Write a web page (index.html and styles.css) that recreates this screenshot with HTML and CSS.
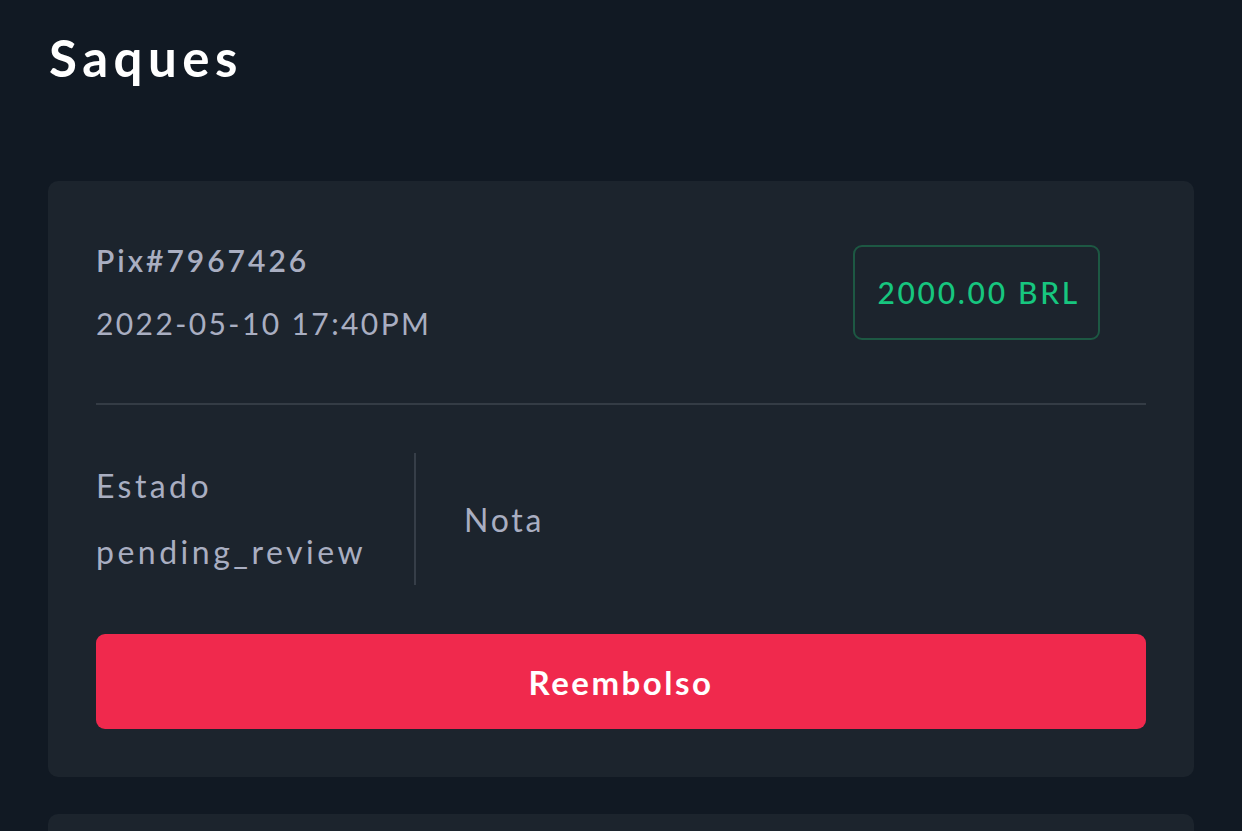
FILE: index.html
```html
<!DOCTYPE html>
<html lang="pt">
<head>
<meta charset="utf-8">
<title>Saques</title>
<link rel="stylesheet" href="styles.css">
</head>
<body>
<main class="page">
  <h1 class="title">Saques</h1>
  <section class="card">
    <div class="head">
      <div class="meta">
        <div class="id">Pix#7967426</div>
        <div class="date">2022-05-10 17:40PM</div>
      </div>
      <div class="amount">2000.00 BRL</div>
    </div>
    <div class="divider"></div>
    <div class="info">
      <div class="status">
        <div class="label">Estado</div>
        <div class="value">pending_review</div>
      </div>
      <div class="note">Nota</div>
    </div>
    <button class="refund">Reembolso</button>
  </section>
  <section class="card card-next"></section>
</main>
</body>
</html>
```
FILE: styles.css
```css
html, body {
  margin: 0;
  padding: 0;
  background: #111923;
  height: 100%;
  overflow: hidden;
}
body {
  font-family: Lato, "Open Sans", sans-serif;
  color: #a9aec1;
}
.page {
  padding: 21px 48px 0 48px;
}
.title {
  margin: 0 0 0 1px;
  font-size: 51px;
  line-height: 74px;
  font-weight: 700;
  color: #ffffff;
  letter-spacing: 5.5px;
}
.card {
  margin-top: 86px;
  background: #1c242d;
  border-radius: 10px;
  padding: 48px;
}
.card-next {
  margin-top: 37px;
  height: 200px;
  padding: 0;
}
.head {
  display: flex;
  justify-content: space-between;
  align-items: center;
  height: 126px;
  padding-right: 46px;
}
.meta {
  font-size: 30px;
  line-height: 63px;
}
.id {
  font-weight: 600;
  letter-spacing: 3px;
}
.date {
  font-weight: 400;
  letter-spacing: 2.4px;
}
.amount {
  box-sizing: border-box;
  height: 95px;
  padding: 0 18px 0 22px;
  display: flex;
  align-items: center;
  border: 2px solid #1d5843;
  border-radius: 9px;
  color: #17c67f;
  font-size: 30px;
  font-weight: 500;
  letter-spacing: 2.7px;
}
.divider {
  height: 2px;
  background: #343c45;
  margin: 48px 0 49px;
}
.info {
  display: flex;
  align-items: stretch;
  height: 131px;
}
.status {
  padding-right: 48px;
  border-right: 2px solid #363e48;
  font-size: 32px;
  line-height: 66px;
  margin-top: -1px;
}
.label {
  letter-spacing: 3.4px;
}
.value {
  letter-spacing: 3.5px;
}
.note {
  display: flex;
  align-items: center;
  padding-left: 48px;
  font-size: 32px;
  letter-spacing: 2.7px;
}
.refund {
  display: block;
  width: 100%;
  margin-top: 49px;
  height: 95px;
  border: 0;
  border-radius: 9px;
  background: #f0294d;
  color: #ffffff;
  font-family: Lato, "Open Sans", sans-serif;
  font-size: 33px;
  font-weight: 700;
  letter-spacing: 2.5px;
  cursor: pointer;
}
```
